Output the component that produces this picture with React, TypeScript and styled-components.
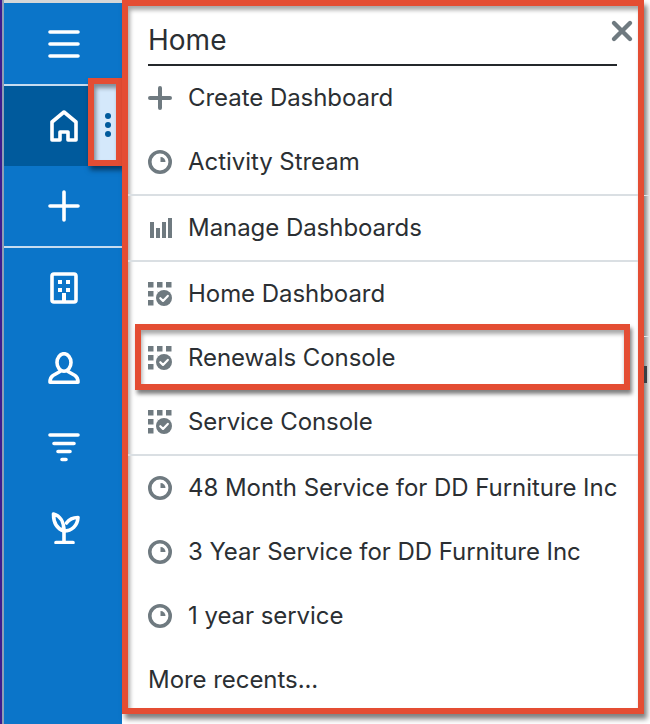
import React from "react";
import styled, { createGlobalStyle } from "styled-components";

const GlobalStyle = createGlobalStyle`
  html, body {
    margin: 0;
    padding: 0;
    background: #fff;
  }
  * {
    box-sizing: border-box;
  }
`;

const Page = styled.div`
  position: relative;
  display: flex;
  width: 650px;
  height: 724px;
  overflow: hidden;
  background: #fff;
  font-family: Inter, "Liberation Sans", sans-serif;
`;

const LeftEdge = styled.div`
  flex: 0 0 4px;
  background: linear-gradient(90deg, #3d1d8f 0 2px, #8f9fb5 2px 4px);
`;

const Sidebar = styled.nav`
  flex: 0 0 118px;
  display: flex;
  flex-direction: column;
  background: #0b75c9;
  border-top: 3px solid #d5d7d8;
`;

const SideRow = styled.div<{ $active?: boolean; $short?: boolean }>`
  position: relative;
  flex: 0 0 ${(p) => (p.$short ? "81px" : "80px")};
  display: flex;
  align-items: center;
  padding-left: 44px;
  background: ${(p) => (p.$active ? "#005a9c" : "transparent")};
`;

const SideDivider = styled.div`
  flex: 0 0 2px;
  background: #c6dcf0;
`;

const DotsMarker = styled.div`
  position: absolute;
  top: -8px;
  right: 0;
  width: 34px;
  height: 88px;
  display: flex;
  flex-direction: column;
  align-items: center;
  justify-content: center;
  gap: 3px;
  padding: 6px 0 0 6px;
  background: #d4e8fb;
  border: 6px solid #e44d33;
  box-shadow: 2px 4px 5px rgba(0, 0, 0, 0.5), inset 2px 4px 4px rgba(0, 0, 0, 0.4);
`;

const Dot = styled.span`
  width: 6px;
  height: 6px;
  border-radius: 50%;
  background: #005a9c;
`;

const Panel = styled.section`
  position: relative;
  flex: 0 0 522px;
  height: 714px;
  display: flex;
  flex-direction: column;
  background: #fff;
  border: 6px solid #e44d33;
  box-shadow: 3px 5px 5px rgba(0, 0, 0, 0.5), inset 2px 4px 4px rgba(0, 0, 0, 0.35);
`;

const Header = styled.header`
  flex: 0 0 60px;
  margin: 0 21px 0 20px;
  display: flex;
  align-items: flex-end;
  padding-bottom: 7px;
  font-size: 28px;
  line-height: 34px;
  color: #2b2f33;
  border-bottom: 2px solid #24282b;
`;

const CloseButton = styled.button`
  position: absolute;
  top: 13px;
  right: 4px;
  width: 24px;
  height: 24px;
  padding: 0;
  border: 0;
  background: none;
  display: flex;
`;

const Row = styled.div<{ $last?: boolean }>`
  position: relative;
  flex: 0 0 ${(p) => (p.$last ? "60px" : "64px")};
  display: flex;
  align-items: center;
  gap: 16px;
  padding: ${(p) => (p.$last ? "4px" : "0")} 0 0 20px;
  font-size: 24px;
  letter-spacing: -0.05px;
  color: #2b2f33;
  white-space: nowrap;
`;

const RowLabel = styled.span`
  padding-bottom: 2px;
`;

const Divider = styled.div`
  flex: 0 0 2px;
  background: #dadfe3;
`;

const RowHighlight = styled.div`
  position: absolute;
  top: -2px;
  bottom: 0;
  left: 7px;
  right: 8px;
  border: 6px solid #e44d33;
  box-shadow: 2px 4px 4px rgba(0, 0, 0, 0.5), inset 1px 4px 4px rgba(0, 0, 0, 0.35);
  pointer-events: none;
`;

const EdgeMark = styled.div`
  position: absolute;
  top: 366px;
  right: 3px;
  width: 3px;
  height: 17px;
  background: #3a3f44;
`;

const EdgeLine = styled.div<{ $top: number }>`
  position: absolute;
  top: ${(p) => p.$top}px;
  right: 0;
  width: 6px;
  height: 1px;
  background: #e3e6e8;
`;

const WHITE = "#fff";
const GRAY = "#6f7a80";

const SideSvg = ({ children }: { children: React.ReactNode }) => (
  <svg
    width="32"
    height="32"
    viewBox="0 0 32 32"
    fill="none"
    stroke={WHITE}
    strokeWidth="3.6"
    strokeLinecap="round"
    strokeLinejoin="round"
  >
    {children}
  </svg>
);

const MenuSvg = ({ children }: { children: React.ReactNode }) => (
  <svg width="24" height="24" viewBox="0 0 24 24" fill="none" style={{ flex: "none" }}>
    {children}
  </svg>
);

const PlusIcon = () => (
  <MenuSvg>
    <path d="M12 2v20M2 12h20" stroke={GRAY} strokeWidth="4" strokeLinecap="round" />
  </MenuSvg>
);

const ClockIcon = () => (
  <MenuSvg>
    <circle cx="12" cy="12" r="10.200" stroke={GRAY} strokeWidth="3.600" />
    <path d="M12.500 7A5 5 0 0 1 17.500 12H12.500z" fill={GRAY} />
  </MenuSvg>
);

const BarsIcon = () => (
  <MenuSvg>
    <path d="M2 6h4v16H2zM8 12h4v10H8zM14 6h4v16h-4zM20 2h4v20h-4z" fill={GRAY} />
  </MenuSvg>
);

const DashboardIcon = () => (
  <MenuSvg>
    <path
      d="M0 0h5.500v5.500H0zM9 0h5.500v5.500H9zM18 0h5.500v5.500H18zM0 9h5.500v5.500H0zM9 9h5.500v5.500H9zM0 18h5.500v5.500H0z"
      fill={GRAY}
    />
    <circle cx="16" cy="16" r="9.500" fill={WHITE} />
    <circle cx="16" cy="16" r="8" fill={GRAY} />
    <path
      d="M12.300 16.200l2.700 2.700 4.800-5"
      stroke={WHITE}
      strokeWidth="2.200"
      strokeLinecap="round"
      strokeLinejoin="round"
    />
  </MenuSvg>
);

const CloseIcon = () => (
  <svg width="24" height="24" viewBox="0 0 24 24" fill="none">
    <path d="M4 4l16 16M20 4L4 20" stroke={GRAY} strokeWidth="4.400" strokeLinecap="round" />
  </svg>
);

export default function App() {
  return (
    <Page>
      <GlobalStyle />
      <LeftEdge />
      <Sidebar>
        <SideRow $short>
          <SideSvg>
            <path d="M2 4h28M2 16h28M2 28h28" />
          </SideSvg>
        </SideRow>
        <SideDivider />
        <SideRow $active>
          <SideSvg>
            <path d="M16 2L4 12v18h8v-8h8v8h8V12z" />
          </SideSvg>
          <DotsMarker>
            <Dot />
            <Dot />
            <Dot />
          </DotsMarker>
        </SideRow>
        <SideRow>
          <SideSvg>
            <path d="M16 2v28M2 16h28" />
          </SideSvg>
        </SideRow>
        <SideDivider />
        <SideRow>
          <SideSvg>
            <rect x="4" y="2" width="24" height="28" rx="2" />
            <path
              d="M10 8h4v4h-4zM18 8h4v4h-4zM10 16h4v4h-4zM18 16h4v4h-4zM14 21h4v9h-4z"
              fill={WHITE}
              stroke="none"
            />
          </SideSvg>
        </SideRow>
        <SideRow>
          <SideSvg>
            <ellipse cx="16" cy="10.500" rx="7" ry="8.800" />
            <path d="M12 19.500L5 23.500C3 24.800 2 27 2 30.200H30C30 27 29 24.800 27 23.500L20 19.500" />
          </SideSvg>
        </SideRow>
        <SideRow>
          <SideSvg>
            <path d="M2 3h28M6 11.500h20M10 19.500h12M14 27.500h4" />
          </SideSvg>
        </SideRow>
        <SideRow>
          <SideSvg>
            <path d="M5.500 2c0 9 4 15 10.500 17 0-9-4-15.500-10.500-17z" />
            <path d="M16 19c8 0 13.500-5.500 14-13.500-5 0-9 2-11.500 5.500" />
            <path d="M16 19v11.500M8 30.500h17" />
          </SideSvg>
        </SideRow>
      </Sidebar>
      <Panel>
        <Header>Home</Header>
        <CloseButton aria-label="Close">
          <CloseIcon />
        </CloseButton>
        <Row>
          <PlusIcon />
          <RowLabel>Create Dashboard</RowLabel>
        </Row>
        <Row>
          <ClockIcon />
          <RowLabel>Activity Stream</RowLabel>
        </Row>
        <Divider />
        <Row>
          <BarsIcon />
          <RowLabel>Manage Dashboards</RowLabel>
        </Row>
        <Divider />
        <Row>
          <DashboardIcon />
          <RowLabel>Home Dashboard</RowLabel>
        </Row>
        <Row>
          <DashboardIcon />
          <RowLabel>Renewals Console</RowLabel>
          <RowHighlight />
        </Row>
        <Row>
          <DashboardIcon />
          <RowLabel>Service Console</RowLabel>
        </Row>
        <Divider />
        <Row>
          <ClockIcon />
          <RowLabel>48 Month Service for DD Furniture Inc</RowLabel>
        </Row>
        <Row>
          <ClockIcon />
          <RowLabel>3 Year Service for DD Furniture Inc</RowLabel>
        </Row>
        <Row>
          <ClockIcon />
          <RowLabel>1 year service</RowLabel>
        </Row>
        <Row $last>
          <RowLabel>More recents...</RowLabel>
        </Row>
      </Panel>
      <EdgeLine $top={195} />
      <EdgeLine $top={336} />
      <EdgeMark />
    </Page>
  );
}
